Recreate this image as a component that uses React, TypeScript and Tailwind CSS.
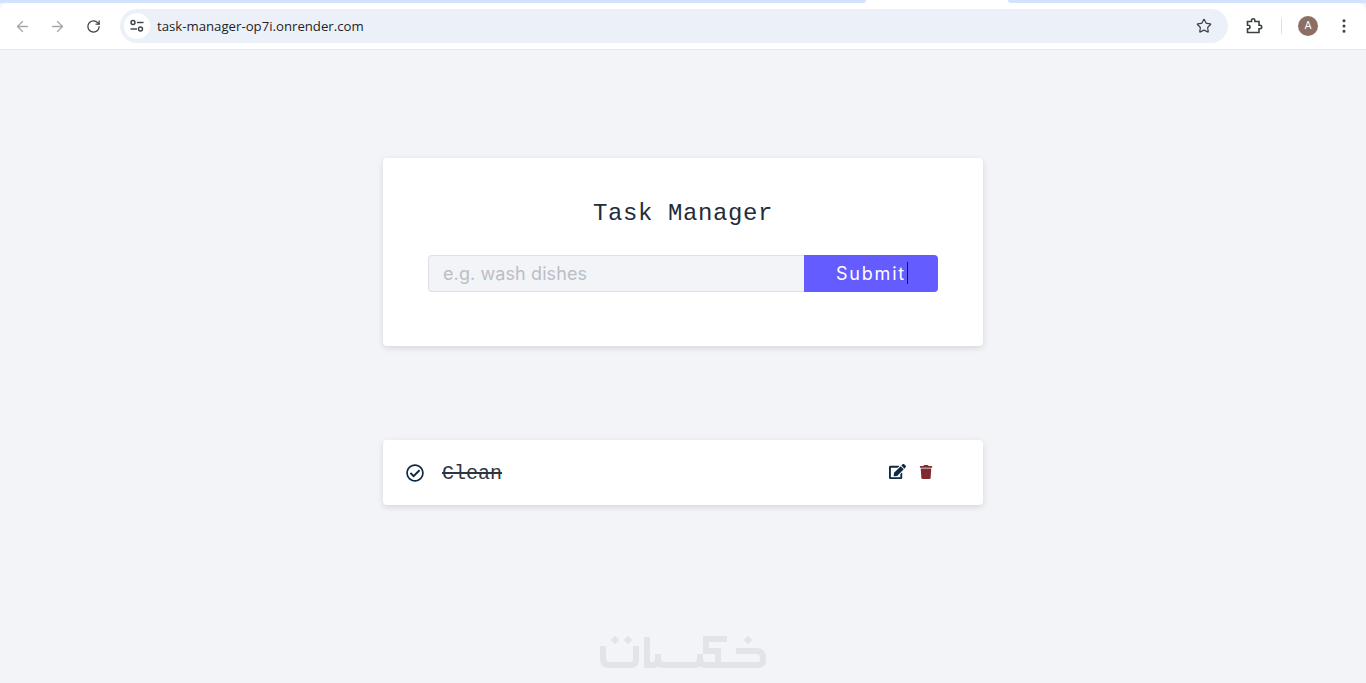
import { ArrowLeft, ArrowRight, EllipsisVertical, RotateCw, Star } from "lucide-react";
import { FaEdit, FaRegCheckCircle, FaTrash } from "react-icons/fa";

function TuneIcon() {
    return (
        <svg width="16" height="16" viewBox="0 0 16 16" fill="none" stroke="#3c4043" strokeWidth="1.4">
            <circle cx="4" cy="4.5" r="2" />
            <path d="M8 4.5h6.5" />
            <circle cx="11.5" cy="11" r="2" />
            <path d="M1.5 11H8" />
        </svg>
    );
}

function ExtensionIcon() {
    return (
        <svg width="18" height="18" viewBox="0 0 18 18" fill="none" stroke="#3c4043" strokeWidth="1.6">
            <path d="M1.5 4.5H5.5V3.5a1.7 1.7 0 0 1 3.4 0V4.5H13V8.3h1a1.7 1.7 0 0 1 0 3.4h-1V15.5H1.5V11.7h.8a1.7 1.7 0 0 0 0-3.4H1.5Z" />
        </svg>
    );
}

function KhamsatLogo() {
    return (
        <svg width="166" height="36" viewBox="0 0 166 36" fill="none" stroke="#e3e4e7" strokeWidth="6">
            <path d="M3 10V23q0 6 6 6H30q6 0 6-6V10" />
            <path d="M47 1V29H52q6 0 6-6V18" />
            <path d="M58 23q0 6 6 6H94q6 0 6-6V18" />
            <path d="M100 23q0 6 6 6h11" />
            <path d="M127 3H106V15H118V32" />
            <path d="M118 29H158q5 0 5-5V22q0-7-7-7H136" />
            <g fill="#e3e4e7" stroke="none">
                <rect x="12" y="1" width="6" height="6" transform="rotate(45 15 4)" />
                <rect x="25" y="1" width="6" height="6" transform="rotate(45 28 4)" />
                <rect x="145" y="1" width="6" height="6" transform="rotate(45 148 4)" />
            </g>
        </svg>
    );
}

export default function App() {
    return (
        <div className="min-h-[683px] h-[683px] overflow-hidden bg-[#f2f4f8] flex flex-col">
            <div className="flex h-[3px] shrink-0 bg-white">
                <div className="w-[866px] bg-[#d3e3fd] rounded-br-[3px]" />
                <div className="flex-1" />
                <div className="w-[358px] bg-[#d3e3fd] rounded-bl-[3px]" />
            </div>
            <div className="h-[47px] shrink-0 bg-white border-b border-[#e4e6ea] flex items-center pl-[14px] rounded-t-[8px]">
                <ArrowLeft size={17} strokeWidth={1.8} className="text-[#a4a7ab] shrink-0" />
                <ArrowRight size={17} strokeWidth={1.8} className="text-[#a4a7ab] shrink-0 ml-[18px]" />
                <RotateCw size={15} strokeWidth={2} className="text-[#3c4043] shrink-0 ml-[20px]" />
                <div className="ml-[19px] h-[34px] w-[1108px] shrink-0 rounded-full bg-[#ecf1f9] flex items-center pl-[4px] pr-[16px]">
                    <div className="w-[26px] h-[26px] rounded-full bg-white flex items-center justify-center">
                        <TuneIcon />
                    </div>
                    <span className="ml-[7px] text-[13.2px] text-[#1f2328] font-['Open_Sans',sans-serif] translate-y-px">task-manager-op7i.onrender.com</span>
                    <Star size={16} strokeWidth={1.8} className="ml-auto text-[#3c4043]" />
                </div>
                <div className="ml-[18px] shrink-0">
                    <ExtensionIcon />
                </div>
                <div className="ml-[17px] w-px h-[16px] bg-[#d3e3fd] shrink-0" />
                <div className="ml-[16px] w-[20px] h-[20px] shrink-0 rounded-full bg-[#8d6e63] text-white text-[11px] flex items-center justify-center font-['Roboto',sans-serif]">A</div>
                <EllipsisVertical size={18} strokeWidth={2} className="text-[#3c4043] shrink-0 ml-[17px]" />
            </div>

            <div className="w-[600px] mx-auto mt-[108px] h-[188px] bg-white rounded-[4px] shadow-[0_2px_6px_rgba(0,0,0,0.12)] px-[45px] pt-[38px]">
                <h1 className="text-center text-[24px] leading-[33px] tracking-[0.6px] text-[#1f2d3a] font-['Liberation_Mono',monospace] translate-y-px">Task Manager</h1>
                <div className="relative flex mt-[26px] h-[37px]">
                    <div className="w-[376px] bg-[#f2f4f8] border border-[#dfe1e8] border-r-0 rounded-l-[4px] pl-[14px] flex items-center text-[18px] tracking-[0.1px] text-[#b9bfc6] font-['Inter',sans-serif]">e.g. wash dishes</div>
                    <div className="flex-1 bg-[#645cff] rounded-r-[4px] flex items-center justify-center text-[18px] tracking-[1.8px] text-white font-['Inter',sans-serif]">Submit</div>
                    <div className="absolute left-[479px] top-[7px] w-px h-[22px] bg-[#1b1b2f]" />
                </div>
            </div>

            <div className="w-[600px] mx-auto mt-[94px] h-[65px] bg-white rounded-[4px] shadow-[0_2px_6px_rgba(0,0,0,0.12)] flex items-center pl-[23px]">
                <FaRegCheckCircle size={18} className="text-[#102a43]" />
                <span className="ml-[18px] text-[20px] line-through text-[#2d3640] font-['Liberation_Mono',monospace] translate-y-px">Clean</span>
                <FaEdit size={17} className="text-[#102a43] ml-[387px] -mt-[2px]" />
                <FaTrash size={14} className="text-[#7f2a2e] ml-[13px] -mt-[2px]" />
            </div>

            <div className="mx-auto mt-[131px] shrink-0">
                <KhamsatLogo />
            </div>
        </div>
    );
}
